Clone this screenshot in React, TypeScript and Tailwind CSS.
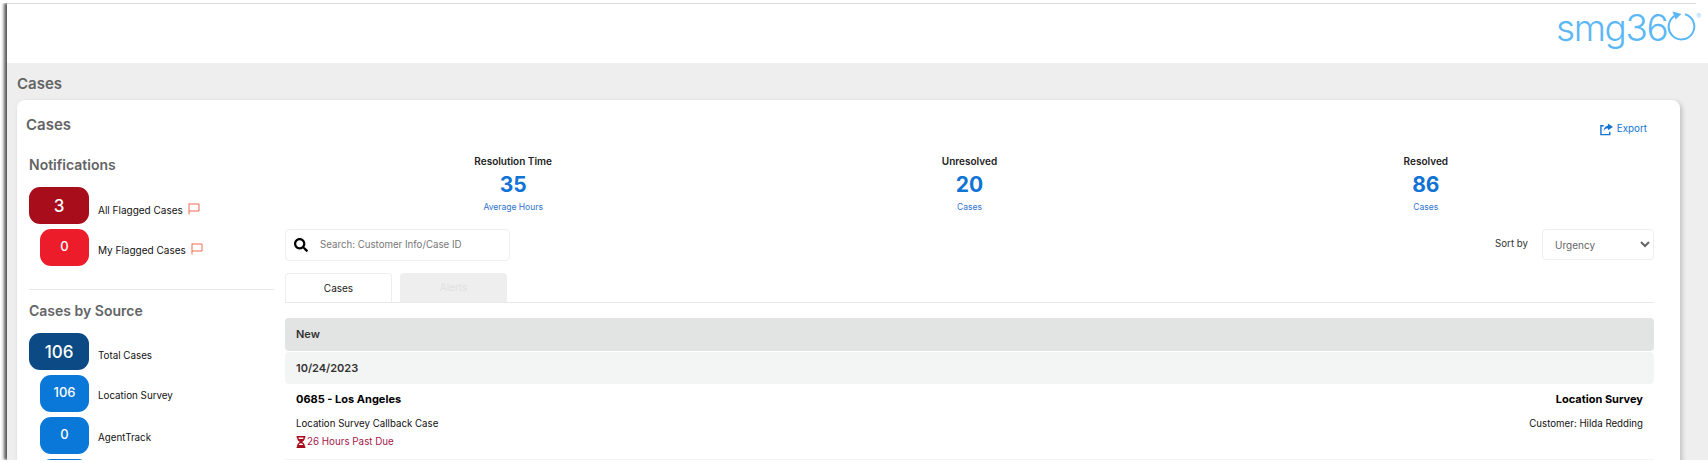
import { FaHourglassHalf, FaSearch } from "react-icons/fa";

const font = "font-['Inter','Liberation_Sans',sans-serif]";

function FlagIcon() {
  return (
    <svg width="12" height="12" viewBox="0 0 12 12" fill="none" stroke="#ef6a55" className="-mt-[3px]">
      <path d="M1 .5v11M1 1h10v7H1" />
    </svg>
  );
}

function ExportIcon() {
  return (
    <svg width="13" height="13" viewBox="0 0 14 13" fill="#1173d4">
      <path d="M4 2.5H1v9.5h9.5V9" fill="none" stroke="#1173d4" strokeWidth="1.5" />
      <path d="M8.5 0L14 3.7 8.5 7.4V5.2C6.2 5.2 4.8 6.2 4 8.4 4 4.9 5.8 2.6 8.5 2.4z" />
    </svg>
  );
}

function Pill({
  value,
  label,
  color,
  large,
  flag,
}: {
  value?: string;
  label?: string;
  color: string;
  large?: boolean;
  flag?: boolean;
}) {
  return (
    <div className="flex items-center">
      <div className="flex w-[60px] justify-end">
        <div
          className={`flex h-[37px] items-center justify-center rounded-[11px] font-medium text-white ${color} ${
            large ? "w-[60px] pt-[3px] text-[17px]" : "w-[49px] pb-[1px] text-[13px]"
          }`}
        >
          {value}
        </div>
      </div>
      <div
        className={`ml-[9px] flex items-center gap-[5px] text-[#111] ${flag ? "text-[10px]" : "text-[9.8px]"} ${
          large ? "pt-[10px]" : "pt-[6px]"
        }`}
      >
        {label}
        {flag && <FlagIcon />}
      </div>
    </div>
  );
}

function Kpi({ title, value, sub }: { title: string; value: string; sub: string }) {
  return (
    <div className="flex flex-col items-center">
      <div className="text-[10px] font-semibold leading-[16px] text-[#222]">{title}</div>
      <div className="text-[21px] font-bold leading-[32px] text-[#1173d4]">{value}</div>
      <div className="text-[8.5px] leading-[13px] text-[#2f74d0]">{sub}</div>
    </div>
  );
}

export default function App() {
  return (
    <div className={`h-[463px] overflow-hidden bg-white pb-[3px] pl-[7px] pt-[3px] ${font}`}>
      <div className="flex h-full flex-col shadow-[-3px_0_3px_rgba(0,0,0,0.65)] [clip-path:inset(0_0_0_-6px)]">
        <div className="mr-[12px] h-px shrink-0 bg-[#dcdcdc]" />
        <header className="flex h-[59px] shrink-0 justify-end bg-white pr-[7px] pt-[2px]">
          <div className="flex items-start text-[#5bb8f5]">
            <span className="text-[37px] font-light leading-[44px] tracking-[-1.4px]">smg36</span>
            <svg width="29" height="30" viewBox="0 0 29 30" fill="none" className="mt-[5px]">
              <path d="M18 3.3a12.8 12.8 0 1 1-9.5 1" stroke="#5bb8f5" strokeWidth="2" />
              <path d="M5.5 0.5l9 2.5-6 5.5z" fill="#5bb8f5" />
            </svg>
            <span className="mt-[7px] text-[7px] leading-none text-[#9fd4f7]">®</span>
          </div>
        </header>

        <main className="flex-1 overflow-hidden bg-[#eeeeee] pl-[10px] pr-[28px]">
          <h1 className="h-[37px] text-[15px] font-semibold leading-[42px] text-[#636466]">Cases</h1>
          <section className="h-[400px] rounded-[8px] bg-white pl-[9px] pr-[26px] shadow-[2px_2px_5px_rgba(0,0,0,0.2)]">
            <div className="flex h-[53px] items-start justify-between">
              <h2 className="pt-[15px] text-[15px] font-semibold leading-[20px] text-[#636466]">Cases</h2>
              <a className="mt-[22px] flex items-center gap-[4px] pr-[7px] text-[9.8px] text-[#1173d4]">
                <ExportIcon />
                Export
              </a>
            </div>

            <div className="flex gap-[11px]">
              <aside className="w-[248px] shrink-0 pl-[3px]">
                <h3 className="text-[14px] font-semibold leading-[24px] text-[#636466]">Notifications</h3>
                <div className="mt-[10px] flex flex-col gap-[5px] border-b border-[#e8e8e8] pb-[23px]">
                  <Pill value="3" label="All Flagged Cases" color="bg-[#a80d1b]" large flag />
                  <Pill value="0" label="My Flagged Cases" color="bg-[#ed1c2b]" flag />
                </div>
                <h3 className="mt-[9px] text-[14px] font-semibold leading-[24px] text-[#636466]">Cases by Source</h3>
                <div className="mt-[10px] flex flex-col gap-[5px]">
                  <Pill value="106" label="Total Cases" color="bg-[#0b4a85]" large />
                  <Pill value="106" label="Location Survey" color="bg-[#0a78d8]" />
                  <Pill value="0" label="AgentTrack" color="bg-[#0a78d8]" />
                  <Pill color="bg-[#0a78d8]" />
                </div>
              </aside>

              <div className="min-w-0 flex-1">
                <div className="grid grid-cols-3">
                  <Kpi title="Resolution Time" value="35" sub="Average Hours" />
                  <Kpi title="Unresolved" value="20" sub="Cases" />
                  <Kpi title="Resolved" value="86" sub="Cases" />
                </div>

                <div className="mt-[15px] flex items-start justify-between">
                  <div className="flex h-[32px] w-[225px] items-center gap-[12px] rounded-[4px] border border-[#eeeeee] pl-[8px]">
                    <FaSearch className="text-[14px] text-black" />
                    <span className="text-[9.7px] text-[#777]">Search: Customer Info/Case ID</span>
                  </div>
                  <div className="flex items-center gap-[14px]">
                    <span className="text-[9.7px] text-[#333]">Sort by</span>
                    <select className="h-[31px] w-[112px] rounded-[4px] border border-[#eeeeee] bg-white pl-[8px] text-[10px] text-[#666]">
                      <option>Urgency</option>
                    </select>
                  </div>
                </div>

                <div className="mt-[12px] flex gap-[8px] border-b border-[#e8e8e8]">
                  <div className="flex h-[29px] w-[107px] items-center justify-center rounded-t-[4px] border border-b-0 border-[#eeeeee] text-[10px] text-[#222]">
                    Cases
                  </div>
                  <div className="flex h-[29px] w-[107px] items-center justify-center rounded-t-[4px] bg-[#eeeeee] text-[10px] text-[#e0e0e0]">
                    Alerts
                  </div>
                </div>

                <div className="mt-[15px] flex h-[33px] items-center rounded-[4px] bg-[#e2e3e3] px-[11px] text-[11px] font-semibold text-[#333]">
                  New
                </div>
                <div className="mt-px flex h-[32px] items-center rounded-[4px] bg-[#f3f4f4] px-[11px] text-[11px] font-semibold text-[#333]">
                  10/24/2023
                </div>
                <div className="border-b-[2px] border-[#f3f4f4] px-[11px] pb-[9px] pt-[5px]">
                  <div className="flex justify-between text-[11px] font-bold leading-[20px] text-black">
                    <span>0685 - Los Angeles</span>
                    <span>Location Survey</span>
                  </div>
                  <div className="mt-[7px] flex justify-between text-[9.7px] leading-[16px] text-[#111]">
                    <span>Location Survey Callback Case</span>
                    <span>Customer: Hilda Redding</span>
                  </div>
                  <div className="mt-[2px] flex items-center text-[9.8px] leading-[16px] text-[#a5184a]">
                    <FaHourglassHalf className="-ml-[1px] mr-[0px] text-[12px] text-[#a80d1b]" />
                    26 Hours Past Due
                  </div>
                </div>
              </div>
            </div>
          </section>
        </main>
      </div>
    </div>
  );
}
